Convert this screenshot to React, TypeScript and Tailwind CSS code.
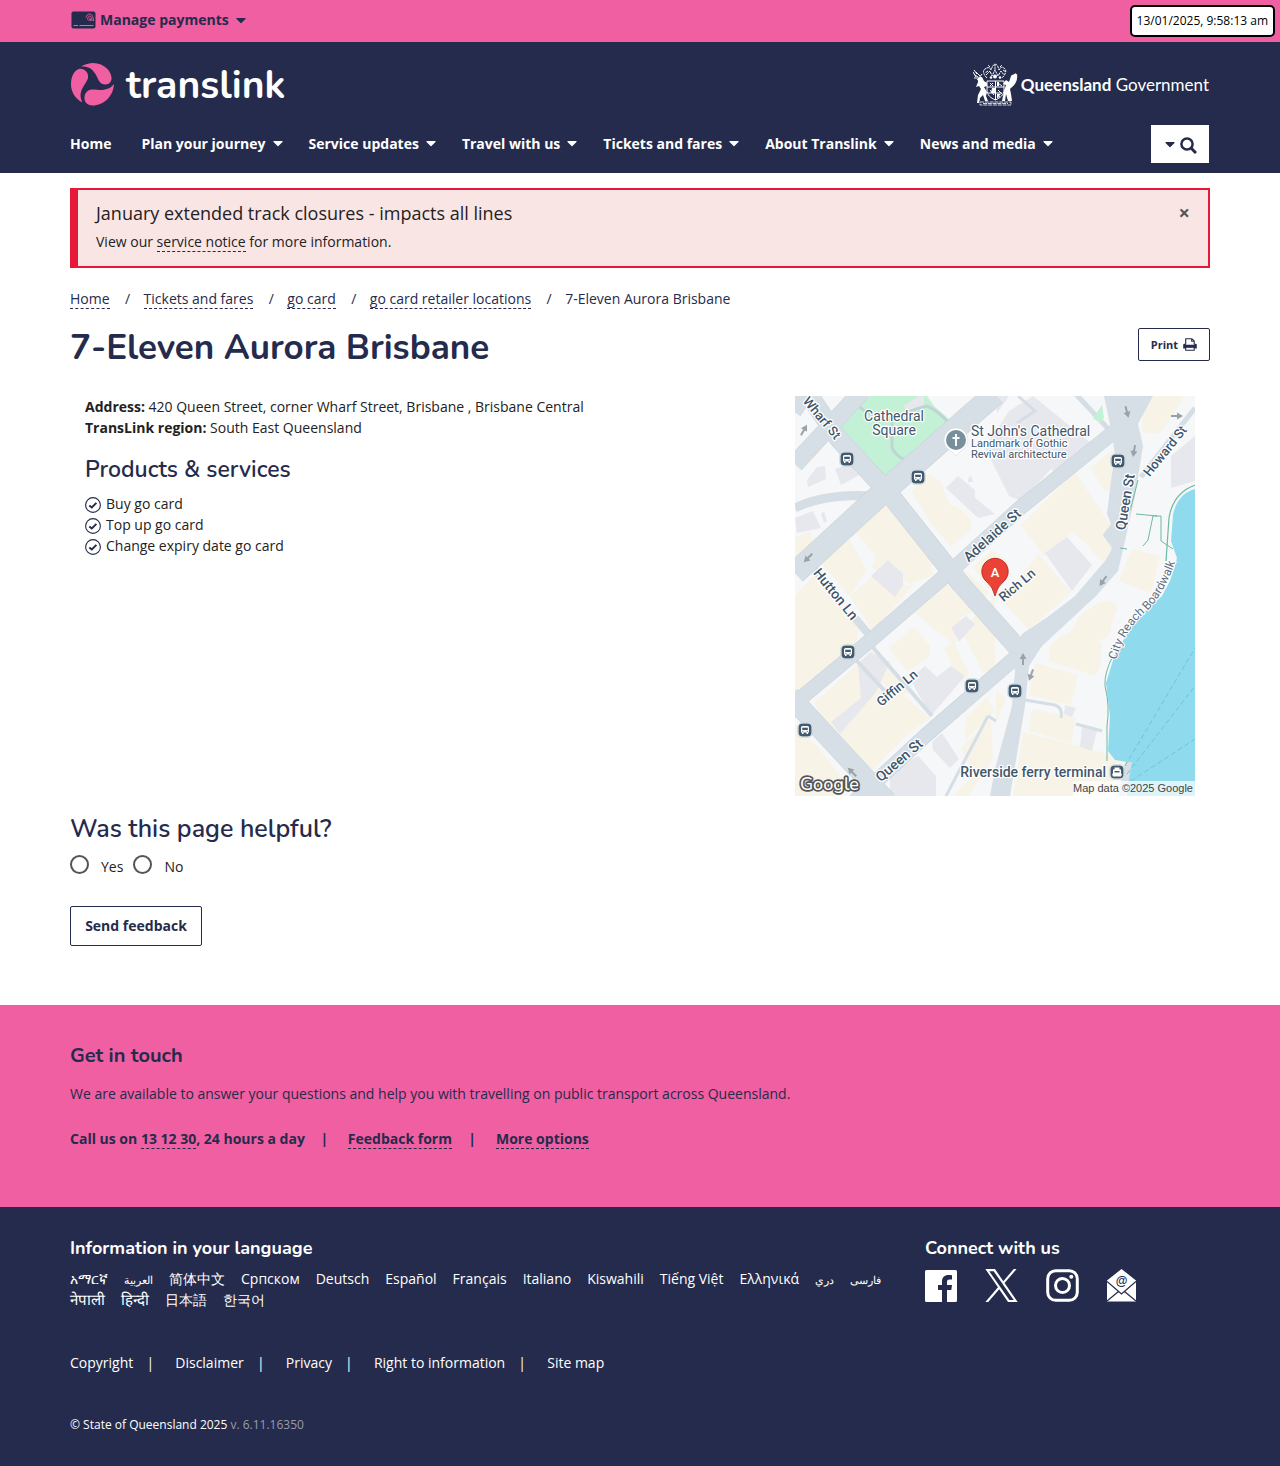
import React from "react";
import { FaCaretDown } from "react-icons/fa";

const container = "mx-auto w-full max-w-[1170px] px-[15px]";
const head = "font-['Nunito','Lato',sans-serif]";

const nav = ["Home", "Plan your journey", "Service updates", "Travel with us", "Tickets and fares", "About Translink", "News and media"];
const crumbs = ["Home", "Tickets and fares", "go card", "go card retailer locations"];
const services = ["Buy go card", "Top up go card", "Change expiry date go card"];
const arabic = "text-[11px]";
const indic = "text-[15px]";
const languages: { name: string; size?: string }[] = [
  { name: "አማርኛ" },
  { name: "العربية", size: arabic },
  { name: "简体中文" },
  { name: "Српском" },
  { name: "Deutsch" },
  { name: "Español" },
  { name: "Français" },
  { name: "Italiano" },
  { name: "Kiswahili" },
  { name: "Tiếng Việt" },
  { name: "Ελληνικά" },
  { name: "دري", size: arabic },
  { name: "فارسی", size: arabic },
  { name: "नेपाली", size: indic },
  { name: "हिन्दी", size: indic },
  { name: "日本語" },
  { name: "한국어" },
];
const legal = ["Copyright", "Disclaimer", "Privacy", "Right to information", "Site map"];

function CardIcon() {
  return (
    <svg className="h-[18px] w-[25px]" viewBox="0 0 25 18" aria-hidden="true">
      <rect x="0.5" y="0.5" width="24" height="17" rx="2" fill="#252b4c" />
      <path d="M2.500 14.500h4.500M8.500 14.500h14" stroke="#f05fa1" strokeWidth="1.200" />
      <g fill="none" stroke="#f05fa1" strokeWidth="0.9">
        <path d="M15 6.500c1.500-5.500 7.500-4.500 7.500 3.500M16.500 8.500c.5-5 4.500-4.500 4.500 1.500M18 10c.2-3.500 1.700-3.500 1.700 0" />
      </g>
    </svg>
  );
}

function TranslinkMark() {
  return (
    <svg className="h-11 w-[45px]" viewBox="0 0 45 44" aria-hidden="true">
      <g fill="#f05fa1">
        <path d="M11 4.500C20-1 31 0 37.500 7C41 11 42.500 16 41 19C39 23.500 32 24 29 19C26 13 23.500 5.500 14.500 4.500Z" />
        <path d="M9 7C14 6 19 10.500 18 16C16.500 21 11 26 10.500 33C10.500 36 11.500 38.500 12.500 40.500C5 36.500 1 30 1 22C1 15 4 8.500 9 7Z" />
        <path d="M44 22C43.500 34 34 43.500 22.500 43.500C17 43.500 14 39.500 14.500 35C15 29.500 19 27 24 27.500C31 28.500 39 28.500 44 22Z" />
      </g>
    </svg>
  );
}

function CoatOfArms() {
  return (
    <svg className="h-[43px] w-[45px]" viewBox="0 0 45 43" aria-hidden="true">
      <g fill="none" stroke="white" strokeWidth="1">
        <path d="M14 15c-3-3-5-7-2-9s5-2 6 1c1-3 2-5 4-6c3 1 3 3 4 6c2-4 4-3 6-1s0 6-3 9M13 12l4-4l2 5l3-6l3 6l3-5l3 4M15 8l-3 2M30 7l3 2M17 4l-2-2M27 4l2-2M22 1v6" strokeDasharray="2.500 0.700" />
        <path d="M14 18h17v9c0 5-4 8-8.500 10c-5-2-8.500-5-8.500-10zM14 24h17M22.500 18v19M15 30h14" />
        <path d="M17 20l3 3M20 20l-3 3M25 20l4 3M17 27l4 5M25 27l4 4M27 33l-3 2" />
        <path d="M2 12l3 2M3 9l4 4M1 15h5M9 11l-3 4M4 17l4-3M0 9l3 5M1 7l3 4M6 38c-1-3 0-6 3-7M36 38c2-3 1-6-1-7" />
        <path d="M7 39h31v3H7zM10 40.500h25" strokeWidth="0.800" strokeDasharray="4 0.800" />
      </g>
      <g fill="white">
        <path d="M5 15l4-1l2 4l3 2v3l-3 1l3 5l-1 4l2 5h-3l-2-6l-3 3l-1 5H4l1-8l3-6l-2-3l-3 1l2-5z" />
        <path d="M44 11c1 7-2 11-7 15l1 5l1 7h-4l-2-7l-1 7h-3l2-10l2-6l-3-1l3-4l3 2l2-6c1-2 4-1 4-3c2 2 2 1 4 0z" />
        <circle cx="22" cy="13.500" r="2" /><circle cx="18" cy="14.500" r="1.300" /><circle cx="27" cy="14.500" r="1.300" />
        <path d="M19 25h3v5h-4zM24 31h4l-4 4zM24 19h2v4h-2z" />
      </g>
    </svg>
  );
}

function SearchIcon() {
  return (
    <svg className="mt-0.5 size-[17px]" viewBox="0 0 17 17" fill="none" stroke="#252b4c" aria-hidden="true">
      <circle cx="7" cy="7" r="5.600" strokeWidth="2.500" />
      <path d="M11 11l5 5" strokeWidth="3" />
    </svg>
  );
}

function PrintIcon() {
  return (
    <svg className="h-[13px] w-[14px]" viewBox="0 0 14 13" fill="none" stroke="#252b4c" aria-hidden="true">
      <path d="M2.700 6.500V.7h6.200l2.300 2.200v3.600M8.700.7v2.500h2.500" strokeWidth="1.100" />
      <path d="M1.500 5.800h1.200v.9h8.600v-.9h1.200q1.300 0 1.300 1.300v3.400H.2V7.100q0-1.300 1.300-1.300z" fill="#252b4c" stroke="none" />
      <path d="M2.700 9.300h8.500v3H2.700z" fill="white" strokeWidth="1.100" />
    </svg>
  );
}

function CheckIcon() {
  return (
    <svg className="mt-0.5 h-4 w-4" viewBox="0 0 16 16" fill="none" stroke="#252b4c" aria-hidden="true">
      <circle cx="8" cy="8" r="7.400" strokeWidth="1.100" />
      <path d="M4.300 8.400l2.500 2.100l4.600-4.700" strokeWidth="1.900" />
    </svg>
  );
}

function Stop({ x, y, ferry = false }: { x: number; y: number; ferry?: boolean }) {
  return (
    <g transform={`translate(${x} ${y})`}>
      <rect x="-7.500" y="-7.500" width="15" height="15" rx="5" fill="white" stroke="#b8c2c9" strokeWidth="0.500" />
      <rect x="-6.500" y="-6.500" width="13" height="13" rx="4" fill="#435b70" />
      {ferry ? (
        <path d="M-2.500-4.500h5v2h1.500v4l1 .5l-1 2.500h-8l-1-2.500l1-.5v-4h1.500zM-2.500-1h5v1.500h-5z" fill="white" fillRule="evenodd" />
      ) : (
        <>
          <path d="M-4-2.500q0-1.500 1.500-1.500h5q1.500 0 1.500 1.500v5h-1v1.500h-1.500v-1.500h-3v1.500h-1.500v-1.500h-1z" fill="white" />
          <path d="M-2.800-2.300h5.600v2.300h-5.600z" fill="#435b70" />
          <path d="M-2.700 1.300h1M1.700 1.300h1" stroke="#435b70" />
        </>
      )}
    </g>
  );
}

function Arrow({ x, y, r }: { x: number; y: number; r: number }) {
  return <path transform={`translate(${x} ${y}) rotate(${r})`} d="M0-6l3.500 6H1v6h-2v-6h-2.500z" fill="#9aa1a8" />;
}

function Label({ x, y, r = 0, size = 14, children, weight = 500, anchor = "middle" }: { x: number; y: number; r?: number; size?: number; children: string; weight?: number; anchor?: "middle" | "start" | "end" }) {
  return (
    <text transform={`translate(${x} ${y}) rotate(${r})`} dominantBaseline="central" textAnchor={anchor} fontSize={size} fontWeight={weight} fill="#3f566b" stroke="white" strokeWidth="2.500" strokeLinejoin="round" paintOrder="stroke">
      {children}
    </text>
  );
}

function LocationMap() {
  return (
    <svg className="h-auto w-full max-w-[400px] font-[Roboto,sans-serif]" viewBox="0 0 400 400" role="img" aria-label="Map of 7-Eleven Aurora Brisbane">
      <rect width="400" height="400" fill="#f6f7f8" />
      <g fill="#f8f3e7">
        <path d="M90 104l38 38l12 24l-25 22l-15-12l-10-12l-14-12l-9-20l5-10zM52 140l20 34l-18 26l-32-38l26-22zM0 142l15-7l4 15l-19 11zM123 84q10-10 23 2l8 22q25 8 22 26l-20 16l-18-20l-21-34z" />
        <path d="M57 132l24 28l-4 12l35 18l28-12l-26-30l-26-15l-15-11zM0 200L20 178l45 52l-5 20L0 297zM55 200l40-35l25 22l-42 48z" />
        <path d="M19 307l44-39l28 28l-14 18l-27 24l-12 2zM44 340l54-50l37 32l-20 14l-40 40zM0 330l20 18l35 45l-15 7H0zM66 264l14-10l37 40l-14 8zM94 252l25-21l16 19v10l-22 16zM119 216l50-42l25 22l-17 20l-12 6l-5 28zM166 234l34-34v73l-12 3zM149 252l10-5l15 30l-8 12z" />
        <path d="M178 170l20-16l15 12l-20 28zM218 193l25-35l33 38l-42 38l-34-38zM226 129l54-53l30 45l6 8l-8 12l8 12l-5 12l-20-18l-14-11l-28 24zM296 72l22-19l2 40l-10 2zM349 0h40l-14 24l-12 14l-16-2zM337 153l28 7l-9 37l-32-12zM272 238q7-4 12-18l18-12q15-8 20 3l-9 30l-18 8l-10-6z" />
        <path d="M255 250q12-17 32-10l20 7l-2 24l-5 9l-46-15zM240 267l43 12l-7 30l-42-10zM237 313l44 8l-5 26l-42-12zM228 336l79 20l25 10l-22 34h-92zM201 294l10 8l-10 25zM172 320l20-19l7 15l-29 29v-15zM166 352l30-29l2 40l-25 37h-15l20-20z" />
      </g>
      <g fill="#e7e8ed">
        <path d="M12 84l10-13l8-1l1 13l-18 8zM40 73l28-10l-2 15l-20 11zM0 122l18-7l8 17l-24 5zM29 115l3 10l-3 2l-3-9zM76 180l17-16l15 14v11l-8 12zM151 92l12-12l17 14v8l20 16l-17 4zM173 83l3-4l2 7h-5zM200 0h14l-12 17zM214 15l24-15l63 51l-33 30l-12-8l-30 32l-12-5l-25-50l12-15zM250 157l22-16l25 28l-20 26zM376 60l24-20v45l-24 7zM63 268l12-12l20 10l-14 30l-36 42l-9-12l30-24zM115 283l15-13l12 11l14-11l14 10l-34 40zM156 232l15-12l9 8l-16 18zM137 346l10-9l17 26l-9 9l-17-18zM95 375l28-15l18 20v20H95zM287 331l15 3l-5 21l-12-4zM270 309l11 3l-4 9l-8-3z" />
      </g>
      <path d="M61 12L76 0h56l7 10l17 15L92 82L44 29z" fill="#c3f1d5" />
      <path d="M109 10l15-10h5v10l-18 6z" fill="#e7e8ed" />
      <g fill="none" stroke="#d5dee5" strokeWidth="3">
        <path d="M63 10q10 9 34 15v25q0 7 14 15M97 25q13-10 35-15q10 4 22 17" stroke="#bfd5d5" />
        <path d="M60 263l30 32M75 248l62 72" strokeWidth="4" />
        <path d="M0 112q30-15 80-12" strokeWidth="9" />
        <path d="M15 168L24 179M60 222L75 240" strokeWidth="8" />
        <path d="M230 304l30 5q8 3 6 13M281 328l26 7M193 320l-42 80M193 320l8 5M223 0l17 15l-18 12" />
        <path d="M400 12L346 81" strokeWidth="5" />
        <path d="M278 -5L318 38" strokeWidth="5" />
      </g>
      <g fill="none" stroke="#c8d2da" strokeLinejoin="round">
        <path d="M0 68L70-8M-2 15L8 0" strokeWidth="18" />
        <path d="M0 177L87 97L200-2" strokeWidth="23" />
        <path d="M8-10L43 42L92 95L165 187L228 258" strokeWidth="19" />
        <path d="M0 307L77 243L158 173L225 112L320 35" strokeWidth="15" />
        <path d="M60 405L130 340L220 262" strokeWidth="15" />
        <path d="M-5 300L92 405" strokeWidth="20" />
      </g>
      <g fill="none" stroke="#d6dfe6" strokeLinejoin="round">
        <path d="M0 68L70-8M-2 15L8 0" strokeWidth="17" />
        <path d="M0 177L87 97L200-2" strokeWidth="22" />
        <path d="M8-10L43 42L92 95L165 187L228 258" strokeWidth="18" />
        <path d="M0 307L77 243L158 173L225 112L320 35" strokeWidth="14" />
        <path d="M60 405L130 340L220 262" strokeWidth="14" />
        <path d="M-5 300L92 405" strokeWidth="19" />
      </g>
      <path d="M309 0L317 38L320 60L316 85L312 118L316 128L307 140L316 155L310 165L280 200L254 220L227 238L218 258L220 275L217 310L200 373L195 400H215L230 310L234 270L247 250L301 200L323 175L330 145L340 100L348 50L343 28L358 0Z" fill="#d6dfe6" />
      <path d="M298 22l9-13l2 13l-4 5z" fill="#c3f1d5" />
      <path d="M307 138l10 14l-8 14l-14-12z" fill="#f8f3e7" />
      <path d="M400 93Q382 98 378 119L376 145L382 162L375 185L367 200L340 225L320 258L311 287L315 320L313 355L320 364L332 366V400H400Z" fill="#90daee" />
      <path d="M330 366h7l-6 34h-8z" fill="#d6dfe6" />
      <g fill="none" stroke="#6dbb9e">
        <path d="M400 89Q378 97 374 122L371 165" strokeWidth="1.200" />
        <path d="M343 84l-8 31M341 118l21 2l-4 0l-5 24l-5 6M325 152l7 1M361 120h5v25l12 8M318 260q-9 17-8 30q5 20 2 40v35" />
      </g>
      <path d="M330 370L400 252M332 378L400 290M336 385L400 343" stroke="#69c5e0" strokeDasharray="5 3" />
      <Arrow x={9} y={34} r={30} /><Arrow x={13} y={162} r={225} /><Arrow x={332} y={16} r={165} /><Arrow x={339} y={55} r={190} />
      <Arrow x={308} y={185} r={215} /><Arrow x={228} y={263} r={0} /><Arrow x={236} y={279} r={200} /><Arrow x={57} y={376} r={-45} /><Arrow x={382} y={20} r={90} />
      <Stop x={52} y={63} /><Stop x={123} y={81} /><Stop x={323} y={65} /><Stop x={53} y={256} /><Stop x={177} y={290} /><Stop x={220} y={295} /><Stop x={10} y={334} /><Stop x={322} y={376} ferry />
      <Label x={27} y={22} r={50} size={13}>Wharf St</Label>
      <Label x={99} y={20} weight={400}>Cathedral</Label>
      <Label x={99} y={34} weight={400}>Square</Label>
      <Label x={176} y={35} weight={400} anchor="start">St John's Cathedral</Label>
      <Label x={176} y={47} weight={400} size={11} anchor="start">Landmark of Gothic</Label>
      <Label x={176} y={58} weight={400} size={11} anchor="start">Revival architecture</Label>
      <Label x={370} y={55} r={-51} size={13}>Howard St</Label>
      <Label x={330} y={106} r={-80}>Queen St</Label>
      <Label x={197} y={139} r={-42}>Adelaide St</Label>
      <Label x={41} y={198} r={51}>Hutton Ln</Label>
      <Label x={222} y={189} r={-40} size={13}>Rich Ln</Label>
      <Label x={102} y={292} r={-40} size={13}>Giffin Ln</Label>
      <Label x={104} y={364} r={-41}>Queen St</Label>
      <Label x={311} y={376} anchor="end">Riverside ferry terminal</Label>
      <path id="boardwalk" d="M321 264Q330 232 354 213Q370 196 381 164" fill="none" />
      <text fontSize="12" fontWeight="400" fill="#5b6f80" stroke="white" strokeWidth="2" paintOrder="stroke"><textPath href="#boardwalk">City Reach Boardwalk</textPath></text>
      <path d="M161 60q-4-5-8-7a12 12 0 1 1 16 0q-4 2-8 7z" fill="white" stroke="#cfd5d9" strokeWidth="0.500" />
      <circle cx="161" cy="44" r="10" fill="#78909c" />
      <path d="M161 38v12M157.500 42h7" stroke="white" strokeWidth="2" />
      <path d="M200 200q-2-9-8-14a13.200 13.200 0 1 1 16 0q-6 5-8 14z" fill="#ea4335" stroke="#b31412" strokeWidth="0.800" />
      <text x="200" y="181" textAnchor="middle" fontSize="13" fontWeight="500" fill="white">A</text>
      <text x="5" y="394" fontSize="18" fontWeight="500" fill="white" stroke="#555" strokeWidth="3.500" strokeLinejoin="round" paintOrder="stroke" className="font-['Nunito',sans-serif]">Google</text>
      <rect x="278" y="385" width="122" height="15" fill="white" opacity="0.700" />
      <text x="398" y="396" textAnchor="end" fontSize="11" fontWeight="400" fill="#444" className="font-['Liberation_Sans',sans-serif]">Map data ©2025 Google</text>
    </svg>
  );
}

function FacebookIcon() {
  return (
    <svg className="size-8" viewBox="0 0 32 32" fill="white" aria-hidden="true">
      <path d="M1.500 0h29a1.500 1.500 0 0 1 1.500 1.500v29a1.500 1.500 0 0 1-1.500 1.500H22V20h4.300l.7-5h-5v-3c0-1.700.8-2.500 2.500-2.500H27V5.200c-1-.2-2.200-.2-3.500-.2C19.500 5 17 7.300 17 11.500V15h-4v5h4v12H1.500a1.500 1.500 0 0 1-1.500-1.500v-29a1.500 1.500 0 0 1 1.500-1.500z" />
    </svg>
  );
}

function XIcon() {
  return (
    <svg className="size-[33px]" viewBox="0 0 1200 1227" fill="white" aria-hidden="true">
      <path d="M714.163 519.284L1160.890 0H1055.030L667.137 450.887L357.328 0H0L468.492 681.821L0 1226.370H105.866L515.491 750.218L842.672 1226.370H1200L714.137 519.284H714.163ZM569.165 687.828L521.697 619.934L144.011 79.694H306.615L611.412 515.685L658.880 583.579L1055.080 1150.300H892.476L569.165 687.854V687.828Z" />
    </svg>
  );
}

function InstagramIcon() {
  return (
    <svg className="size-[33px]" viewBox="0 0 33 33" fill="none" stroke="white" strokeWidth="3" aria-hidden="true">
      <rect x="1.700" y="1.700" width="29.600" height="29.600" rx="8" />
      <circle cx="16.500" cy="16.500" r="7" />
      <circle cx="25.300" cy="7.800" r="2" fill="white" stroke="none" />
    </svg>
  );
}

function MailIcon() {
  return (
    <svg className="h-[33px] w-[29px]" viewBox="0 0 29 33" aria-hidden="true">
      <path d="M14.500 0L29 11.500V32.500H0V11.500z" fill="white" />
      <path d="M0 12.500L14.500 25L29 12.500M0 32L11.500 22.500M29 32L17.500 22.500" fill="none" stroke="#252b4c" strokeWidth="1.300" />
      <text x="14.500" y="16" textAnchor="middle" fontSize="12" fontWeight="600" fill="#252b4c" className="font-['Liberation_Sans',sans-serif]">@</text>
    </svg>
  );
}

const dashed = "border-b border-dashed border-[#252b4c]";

export default function App() {
  return (
    <div className="min-h-screen bg-white font-['Open_Sans',sans-serif] text-sm leading-[21px] font-normal text-[#222]">
      <div className="relative bg-[#f05fa1] text-[#252b4c]">
        <div className={`${container} flex h-[42px] items-center`}>
          <button className="flex items-center gap-1 pb-[3px] pl-px font-bold">
            <CardIcon />
            <span>Manage payments</span>
            <FaCaretDown className="size-4" />
          </button>
        </div>
        <div className="absolute top-[5px] right-[5px] flex h-8 items-center rounded-[5px] border-2 border-black bg-white px-[5px] text-xs text-black">13/01/2025, 9:58:13 am</div>
      </div>

      <header className="bg-[#252b4c] text-white">
        <div className={container}>
          <div className="flex items-start justify-between pt-5">
            <a href="#" className="flex h-11 items-center gap-[11px]">
              <TranslinkMark />
              <span className={`${head} pt-1 text-[39px] leading-11 font-bold`}>translink</span>
            </a>
            <a href="#" className="flex items-center pt-px pr-px font-['Lato',sans-serif] text-[17px]">
              <CoatOfArms />
              <span className="ml-[3px]"><b className="font-bold">Queensland</b> Government</span>
            </a>
          </div>
          <div className="flex items-center justify-between pt-[19px] pb-[10px]">
            <nav className="flex gap-[23px] pb-0.5 font-bold">
              {nav.map((n, i) => (
                <a key={n} href="#" className={i === 0 ? "mr-[7px] flex items-center" : "flex items-center gap-1"}>
                  {n}
                  {i > 0 && <FaCaretDown className="size-4" />}
                </a>
              ))}
            </nav>
            <button aria-label="Search" className="mr-px flex h-[38px] w-[58px] items-center justify-center gap-0.5 bg-white pr-0.5 text-[#252b4c]">
              <FaCaretDown className="size-4" />
              <SearchIcon />
            </button>
          </div>
        </div>
      </header>

      <main className={`${container} pt-[15px]`}>
        <section className="flex items-start justify-between border-2 border-l-8 border-[#e61938] bg-[#f9e5e4] px-[18px] pt-[11px] pb-3">
          <div>
            <h2 className="text-lg leading-6">January extended track closures - impacts all lines</h2>
            <p className="mt-[6px] pb-[2px]">View our <a href="#" className={dashed}>service notice</a> for more information.</p>
          </div>
          <button aria-label="Close" className="text-xl leading-6 font-bold text-[#555]">×</button>
        </section>

        <nav aria-label="Breadcrumb" className="mt-5 flex text-[#252b4c]">
          {crumbs.map((c) => (
            <React.Fragment key={c}>
              <span><a href="#" className={dashed}>{c}</a></span>
              <span className="w-[34px] pl-0.5 text-center">/</span>
            </React.Fragment>
          ))}
          <span>7-Eleven Aurora Brisbane</span>
        </nav>

        <div className="mt-[19px] flex items-start justify-between">
          <h1 className={`${head} text-[35px] leading-10 font-bold text-[#252b4c]`}>7-Eleven Aurora Brisbane</h1>
          <button className="flex h-[33px] w-[72px] items-center justify-center gap-[5px] rounded-xs border border-[#252b4c] text-[11px] font-bold text-[#252b4c]">Print <PrintIcon /></button>
        </div>

        <div className="mt-7 flex justify-between px-[15px]">
          <section>
            <p><b className="font-bold">Address:</b> 420 Queen Street, corner Wharf Street, Brisbane , Brisbane Central</p>
            <p><b className="font-bold">TransLink region:</b> South East Queensland</p>
            <h2 className={`${head} mt-[18px] text-[23px] leading-7 font-semibold text-[#252b4c]`}>Products &amp; services</h2>
            <ul className="mt-[9px]">
              {services.map((s) => (
                <li key={s} className="flex items-center gap-[5px]"><CheckIcon />{s}</li>
              ))}
            </ul>
          </section>
          <LocationMap />
        </div>

        <form className="mt-[18px] pb-[59px]" onSubmit={(e) => e.preventDefault()}>
          <fieldset>
            <legend className={`${head} text-[25px] leading-[30px] font-semibold text-[#252b4c]`}>Was this page helpful?</legend>
            <div className="mt-[11px] flex gap-[10px]">
              {["Yes", "No"].map((o) => (
                <label key={o} className="flex items-start gap-3">
                  <input type="radio" name="helpful" className="size-[19px] appearance-none rounded-full border-2 border-[#555] bg-white" />
                  <span className="pt-px">{o}</span>
                </label>
              ))}
            </div>
          </fieldset>
          <button className="mt-[29px] h-10 w-[132px] rounded-xs border border-[#252b4c] pb-0.5 font-bold text-[#252b4c]">Send feedback</button>
        </form>
      </main>

      <section className="bg-[#f05fa1] pt-[37px] pb-[58px] text-[#252b4c]">
        <div className={container}>
          <h2 className={`${head} text-xl leading-7 font-bold`}>Get in touch</h2>
          <p className="mt-[13px]">We are available to answer your questions and help you with travelling on public transport across Queensland.</p>
          <p className="mt-6 flex font-bold">
            <span>Call us on <a href="#" className={dashed}>13 12 30</a>, 24 hours a day</span>
            <span className="w-[43px] pr-1 text-center">|</span>
            <span><a href="#" className={dashed}>Feedback form</a></span>
            <span className="w-[44px] pr-1 text-center">|</span>
            <span><a href="#" className={dashed}>More options</a></span>
          </p>
        </div>
      </section>

      <footer className="bg-[#252b4c] pt-[29px] pb-[31px] text-white">
        <div className={container}>
          <div className="flex">
            <div className="w-3/4">
              <h2 className={`${head} text-lg leading-6 font-bold`}>Information in your language</h2>
              <ul className="mt-2 flex flex-wrap gap-x-4 pr-[15px]">
                {languages.map((l) => (
                  <li key={l.name} className="h-[21px]"><a href="#" className={l.size}>{l.name}</a></li>
                ))}
              </ul>
            </div>
            <div>
              <h2 className={`${head} text-lg leading-6 font-bold`}>Connect with us</h2>
              <div className="mt-[9px] flex items-center gap-7">
                <a href="#" aria-label="Facebook"><FacebookIcon /></a>
                <a href="#" aria-label="X"><XIcon /></a>
                <a href="#" aria-label="Instagram"><InstagramIcon /></a>
                <a href="#" aria-label="Email"><MailIcon /></a>
              </div>
            </div>
          </div>
          <ul className="mt-[42px] flex">
            {legal.map((l, i) => (
              <li key={l} className="flex"><a href="#">{l}</a>{i < legal.length - 1 && <span className="w-[42px] pr-2 text-center">|</span>}</li>
            ))}
          </ul>
          <p className="mt-[41px] text-xs leading-[21px]">© State of Queensland 2025 <span className="text-[#9a9ca8]">v. 6.11.16350</span></p>
        </div>
      </footer>
    </div>
  );
}
